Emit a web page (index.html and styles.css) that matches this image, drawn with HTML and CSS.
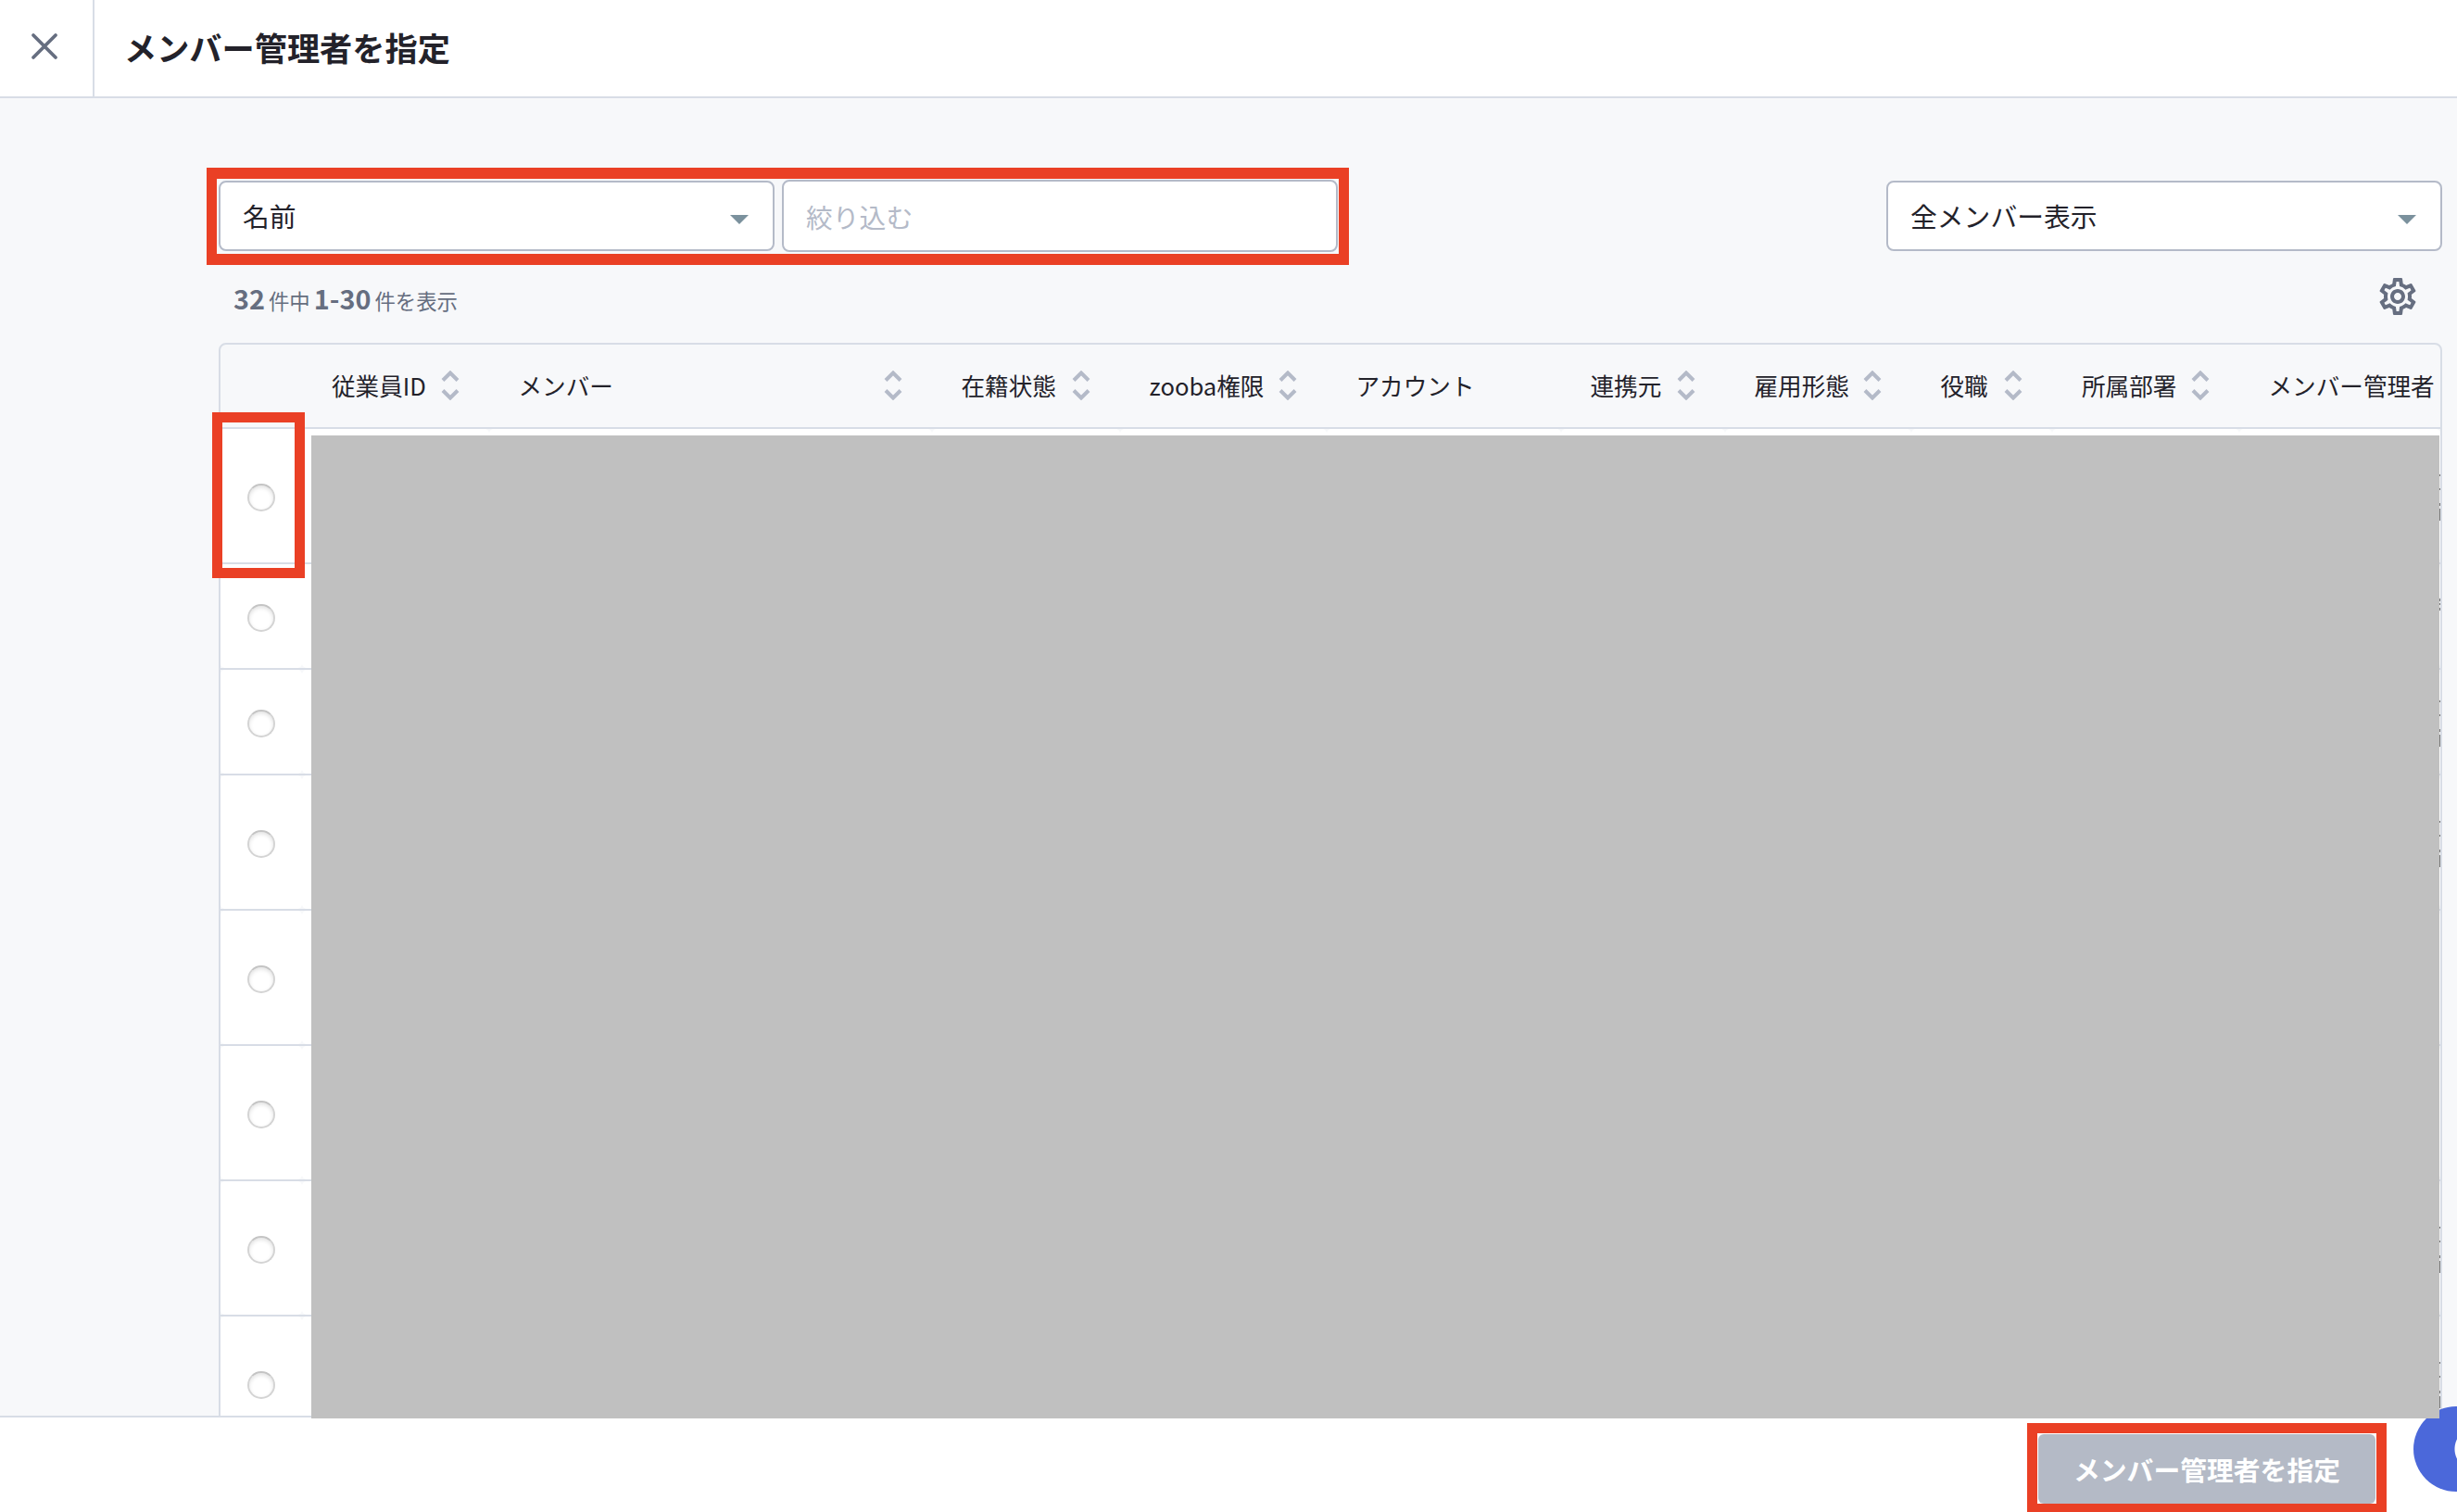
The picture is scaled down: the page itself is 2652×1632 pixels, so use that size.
FILE: index.html
```
<!DOCTYPE html>
<html lang="ja">
<head>
    <meta charset="UTF-8">
    <meta name="viewport" content="width=device-width, initial-scale=1.0">
    <title>メンバー管理者を指定</title>
    <link rel="stylesheet" href="styles.css">
</head>
<body>
    <svg class="symbols" width="0" height="0">
        <symbol id="sort" viewBox="0 0 20 32">
            <path d="M2 10.5L10 2.5L18 10.5M2 21.5L10 29.5L18 21.5" fill="none" stroke="#b4bac8" stroke-width="4"/>
        </symbol>
    </svg>

    <header class="header">
        <button class="close" aria-label="閉じる">
            <svg width="32" height="32" viewBox="0 0 32 32">
                <path d="M4 4L28 28M28 4L4 28" stroke="#666e80" stroke-width="3.8" stroke-linecap="round"/>
            </svg>
        </button>
        <h1>メンバー管理者を指定</h1>
    </header>

    <main class="main">
        <div class="filters">
            <div class="select"><span>名前</span><i class="arrow"></i></div>
            <input class="search" type="text" placeholder="絞り込む">
            <div class="select view"><span>全メンバー表示</span><i class="arrow"></i></div>
        </div>

        <div class="summary">
            <p><b>32</b><span class="total">件中</span><b>1-30</b><span class="shown">件を表示</span></p>
            <svg class="gear" width="48" height="48" viewBox="0 0 24 24" fill="#666e80">
                <path d="M19.43 12.98c.04-.32.07-.64.07-.98 0-.34-.03-.66-.07-.98l2.11-1.65c.19-.15.24-.42.12-.64l-2-3.46c-.09-.16-.26-.25-.44-.25-.06 0-.12.01-.17.03l-2.49 1c-.52-.4-1.08-.73-1.69-.98l-.38-2.65C14.46 2.18 14.25 2 14 2h-4c-.25 0-.46.18-.49.42l-.38 2.65c-.61.25-1.17.59-1.69.98l-2.49-1c-.06-.02-.12-.03-.18-.03-.17 0-.34.09-.43.25l-2 3.46c-.13.22-.07.49.12.64l2.11 1.65c-.04.32-.07.65-.07.98 0 .33.03.66.07.98l-2.11 1.65c-.19.15-.24.42-.12.64l2 3.46c.09.16.26.25.44.25.06 0 .12-.01.17-.03l2.49-1c.52.4 1.08.73 1.69.98l.38 2.65c.03.24.24.42.49.42h4c.25 0 .46-.18.49-.42l.38-2.65c.61-.25 1.17-.59 1.69-.98l2.49 1c.06.02.12.03.18.03.17 0 .34-.09.43-.25l2-3.46c.12-.22.07-.49-.12-.64l-2.11-1.65zm-1.98-1.71c.04.31.05.52.05.73 0 .21-.02.43-.05.73l-.14 1.13.89.7 1.08.84-.7 1.21-1.27-.51-1.04-.42-.9.68c-.43.32-.84.56-1.25.73l-1.06.43-.16 1.13-.2 1.35h-1.4l-.19-1.35-.16-1.13-1.06-.43c-.43-.18-.83-.41-1.23-.71l-.91-.7-1.06.43-1.27.51-.7-1.21 1.08-.84.89-.7-.14-1.13c-.03-.31-.05-.54-.05-.74s.02-.43.05-.73l.14-1.13-.89-.7-1.08-.84.7-1.21 1.27.51 1.04.42.9-.68c.43-.32.84-.56 1.25-.73l1.06-.43.16-1.13.2-1.35h1.39l.19 1.35.16 1.13 1.06.43c.43.18.83.41 1.23.71l.91.7 1.06-.43 1.27-.51.7 1.21-1.07.85-.89.7.14 1.13zM12 8c-2.21 0-4 1.79-4 4s1.79 4 4 4 4-1.79 4-4-1.79-4-4-4zm0 6c-1.1 0-2-.9-2-2s.9-2 2-2 2 .9 2 2-.9 2-2 2z"/>
            </svg>
        </div>

        <div class="table">
            <div class="row head">
                <div></div>
                <div>従業員ID<svg><use href="#sort"/></svg></div>
                <div>メンバー<svg><use href="#sort"/></svg></div>
                <div>在籍状態<svg><use href="#sort"/></svg></div>
                <div>zooba権限<svg><use href="#sort"/></svg></div>
                <div>アカウント</div>
                <div>連携元<svg><use href="#sort"/></svg></div>
                <div>雇用形態<svg><use href="#sort"/></svg></div>
                <div>役職<svg><use href="#sort"/></svg></div>
                <div>所属部署<svg><use href="#sort"/></svg></div>
                <div>メンバー管理者</div>
            </div>
            <div id="rows"></div>
        </div>
    </main>

    <footer class="footer">
        <button class="submit" disabled>メンバー管理者を指定</button>
    </footer>

    <div class="chat"></div>
    <div class="mask"></div>
    <div class="mark mark-filter"></div>
    <div class="mark mark-radio"></div>
    <div class="mark mark-submit"></div>

    <script>
        const rows = ['tall clip', 'short clip-small', 'short clip', 'tall clip', 'tall', 'tall', 'tall clip', 'tall clip'];
        const list = document.getElementById('rows');

        rows.forEach(type => {
            const row = document.createElement('div');
            row.className = `row ${type}`;
            row.innerHTML = '<div><span class="radio"></span></div>' + '<div></div>'.repeat(10);
            list.appendChild(row);
        });
    </script>
</body>
</html>
```
FILE: styles.css
```
* {
    box-sizing: border-box;
}
body {
    margin: 0;
    height: 1632px;
    display: flex;
    flex-direction: column;
    position: relative;
    overflow: hidden;
    background: #f7f8fa;
    color: #23222a;
    font-family: "Noto Sans CJK JP", sans-serif;
    font-size: 28.8px;
}
.symbols {
    position: absolute;
}
.header {
    height: 106px;
    flex: none;
    display: flex;
    background: #fff;
    border-bottom: 2px solid #d8dde6;
}
.close {
    width: 102px;
    padding: 0 4px 4px 0;
    border: none;
    border-right: 2px solid #d8dde6;
    background: none;
    display: flex;
    align-items: center;
    justify-content: center;
}
h1 {
    margin: 0 0 0 32px;
    font-size: 35.2px;
    line-height: 102px;
}
.main {
    flex: 1;
    min-height: 0;
    overflow: hidden;
    padding: 88px 16px 0 236px;
}
.filters {
    display: flex;
    align-items: center;
    gap: 8px;
}
.select, .search {
    width: 600px;
    height: 76px;
    padding: 0 26px 0 24px;
    border: 2px solid #b4bac8;
    border-radius: 8px;
    background: #fff;
}
.select {
    display: flex;
    align-items: center;
    justify-content: space-between;
    padding-bottom: 2px;
}
.search {
    height: 78px;
    font: inherit;
}
.search::placeholder {
    color: #b4bac8;
}
.view {
    margin-left: auto;
}
.arrow {
    margin-top: 9px;
    border: 10px solid transparent;
    border-top-color: #7b919d;
    border-bottom: none;
}
.summary {
    height: 98px;
    display: flex;
    justify-content: space-between;
    padding: 24px 24px 0 16px;
    color: #666e80;
}
.summary p {
    margin: 0;
    font-size: 22.4px;
    line-height: 52px;
    white-space: nowrap;
}
.summary b {
    font-size: 28.8px;
}
.total {
    margin: 0 4px;
}
.shown {
    margin-left: 4px;
}
.table {
    height: 1300px;
    border: 2px solid #d8dde6;
    border-radius: 8px 8px 0 0;
    overflow: hidden;
}
.row {
    display: grid;
    grid-template-columns: 88px 201.5px 478px 203px 223px 253px 177px 201px 152.5px 201.5px 1fr;
    border-bottom: 2px solid #d8dde6;
}
.row > div {
    background: #fff;
    border-radius: 5px;
}
.head {
    height: 91px;
    font-size: 25.6px;
}
.head > div {
    display: flex;
    align-items: center;
    justify-content: space-between;
    padding: 0 32px 2px;
    background: none;
    white-space: nowrap;
}
.head svg {
    width: 20px;
    height: 32px;
    flex: none;
}
.tall {
    height: 146px;
}
.short {
    height: 114px;
}
.row > div:first-child {
    display: flex;
    align-items: center;
    padding: 4px 0 0 29px;
}
.radio {
    width: 30px;
    height: 30px;
    border: 2px solid #d4d4d4;
    border-top-color: #c4c4c4;
    border-radius: 50%;
    box-shadow: inset 0 2px 4px #e2e2e2;
}
/* edges of the text that runs past the mask */
.clip, .clip-small {
    --y: 49px;
    position: relative;
}
.short.clip {
    --y: 33px;
}
.clip::after, .clip-small::after {
    content: "";
    position: absolute;
    right: 0;
    top: var(--y);
    width: 1px;
    height: 50px;
    background: linear-gradient(#777 2px, #eee 2px 15px, #777 15px 17px, #eee 17px 31px, #777 31px 34px, #eee 34px 37px, #777 37px);
}
.clip-small::after {
    top: 37px;
    height: 13px;
    background: linear-gradient(#777 3px, #eee 3px 5px, #777 5px 7px, #eee 7px 10px, #777 10px);
}
.footer {
    height: 104px;
    flex: none;
    display: flex;
    justify-content: flex-end;
    padding: 18px 88px 0 0;
    background: #fff;
    border-top: 2px solid #d8dde6;
}
.submit {
    width: 364px;
    height: 75px;
    padding: 0;
    border: none;
    border-radius: 6px;
    background: #b4bac6;
    color: #fff;
    font: inherit;
    font-weight: bold;
}
.chat {
    position: absolute;
    left: 2605px;
    top: 1518px;
    width: 92px;
    height: 92px;
    border-radius: 50%;
    background: radial-gradient(circle at 68px 46px, #fff 23px, #4b68da 24px);
}
.mask {
    position: absolute;
    left: 336px;
    top: 470px;
    width: 2297px;
    height: 1061px;
    background: #c0c0c0;
}
.mark {
    position: absolute;
    border: 11px solid #ea4025;
}
.mark-filter {
    left: 223px;
    top: 181px;
    width: 1233px;
    height: 105px;
    border-width: 12px 11px;
}
.mark-radio {
    left: 229px;
    top: 445px;
    width: 100px;
    height: 179px;
}
.mark-submit {
    left: 2188px;
    top: 1536px;
    width: 388px;
    height: 98px;
}
```
